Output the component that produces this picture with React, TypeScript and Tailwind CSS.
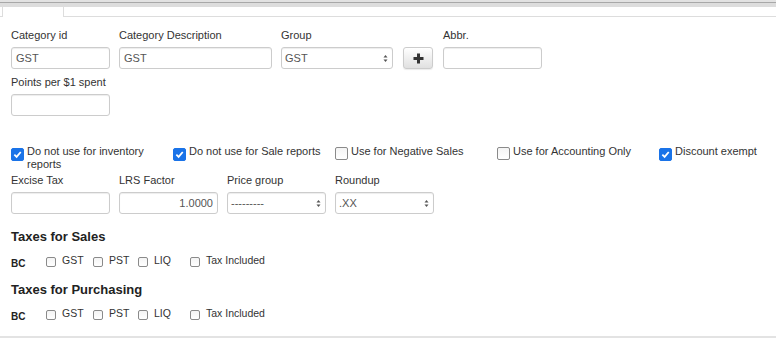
import React from 'react';

const Box = ({ checked = false, size = 13 }: { checked?: boolean; size?: number }) => (
  <span
    className={
      size === 13
        ? `inline-flex shrink-0 w-[13px] h-[13px] items-center justify-center rounded-[2px] border ${
            checked ? 'bg-[#1a73e8] border-[#1a73e8]' : 'bg-gradient-to-b from-[#f4f4f4] to-white border-[#8a8a8a]'
          }`
        : 'inline-flex shrink-0 w-[10px] h-[10px] rounded-[2px] border border-[#8a8a8a] bg-gradient-to-b from-[#f4f4f4] to-white'
    }
  >
    {checked && (
      <svg width="9" height="9" viewBox="0 0 10 10">
        <path d="M1.5 5.2 L4 7.6 L8.6 2.2" fill="none" stroke="white" strokeWidth="2" />
      </svg>
    )}
  </span>
);

const Arrows = () => (
  <svg width="5" height="9" viewBox="0 0 5 9" className="shrink-0">
    <path d="M0.5 3.5 L2.5 1 L4.5 3.5 Z" fill="#555" />
    <path d="M0.5 5.5 L2.5 8 L4.5 5.5 Z" fill="#555" />
  </svg>
);

const inputCls =
  'h-[22px] border border-[#ccc] rounded-[3px] bg-white shadow-[inset_0_1px_1px_rgba(0,0,0,0.075)] text-[11px] text-[#555] flex items-center';

const Field = ({ label, w, value = '', right = false }: { label?: string; w: string; value?: string; right?: boolean }) => (
  <div className={`flex flex-col shrink-0 ${w}`}>
    {label && <div className="leading-[15px] mb-[4px]">{label}</div>}
    <div className={`${inputCls} ${right ? 'justify-end pr-[4px]' : 'pl-[4px]'}`}>{value}</div>
  </div>
);

const Select = ({ label, w, value }: { label: string; w: string; value: string }) => (
  <div className={`flex flex-col shrink-0 ${w}`}>
    <div className="leading-[15px] mb-[4px]">{label}</div>
    <div className={`${inputCls} pl-[3px] pr-[4px] justify-between`}>
      <span>{value}</span>
      <Arrows />
    </div>
  </div>
);

const Check = ({ label, checked }: { label: string; checked?: boolean }) => (
  <div className="w-[162px] shrink-0 flex items-start gap-[3px]">
    <div className="mt-[2px]">
      <Box checked={checked} />
    </div>
    <span className="leading-[13px]">{label}</span>
  </div>
);

const TaxRow = () => (
  <div className="flex items-start h-[14px] text-[10.5px]">
    <span className="w-[35px] pt-[5px] text-[10px] leading-[12px] font-bold text-[#222]">BC</span>
    {[
      ['GST', 'w-[47px]'],
      ['PST', 'w-[45px]'],
      ['LIQ', 'w-[52px]'],
      ['Tax Included', ''],
    ].map(([t, w]) => (
      <div key={t} className={`flex items-start gap-[6px] ${w}`}>
        <div className="mt-[3px]">
          <Box size={10} />
        </div>
        <span className="leading-[12px] mt-[1px]">{t}</span>
      </div>
    ))}
  </div>
);

export default function App() {
  return (
    <div className="w-[776px] h-[338px] bg-white flex flex-col overflow-hidden font-['Liberation_Sans',Arial,sans-serif] text-[11px] text-[#333]">
      {/* top chrome */}
      <div className="h-[2px] bg-[#e2e2e2]" />
      <div className="h-[1px] bg-[#a8a8a8]" />
      <div className="h-[4px] bg-[#dddddd]" />
      {/* tabs */}
      <div className="flex h-[10px]">
        <div className="w-[2px] border-b border-[#ddd]" />
        <div className="w-[62px] border-x border-[#ddd]" />
        <div className="flex-1 border-b border-[#ddd]" />
      </div>

      <div className="flex-1 px-[11px] pt-[11px]">
        <div className="flex items-end">
          <Field label="Category id" w="w-[99px]" value="GST" />
          <div className="w-[9px]" />
          <Field label="Category Description" w="w-[153px]" value="GST" />
          <div className="w-[9px]" />
          <Select label="Group" w="w-[112px]" value="GST" />
          <div className="w-[10px]" />
          <button className="w-[30px] h-[22px] rounded-[3px] border border-[#ccc] bg-gradient-to-b from-white to-[#e0e0e0] shadow-[0_1px_1px_rgba(0,0,0,0.08)] flex items-center justify-center">
            <svg width="11" height="11" viewBox="0 0 11 11">
              <path d="M5.5 0.5 V10.5 M0.5 5.5 H10.5" stroke="#333" strokeWidth="3" />
            </svg>
          </button>
          <div className="w-[10px]" />
          <Field label="Abbr." w="w-[99px]" />
        </div>

        <div className="mt-[6px]">
          <Field label="Points per $1 spent" w="w-[99px]" />
        </div>

        <div className="flex mt-[29px]">
          <Check label="Do not use for inventory reports" checked />
          <Check label="Do not use for Sale reports" checked />
          <Check label="Use for Negative Sales" />
          <Check label="Use for Accounting Only" />
          <Check label="Discount exempt" checked />
        </div>

        <div className="flex gap-[9px] mt-[2px]">
          <Field label="Excise Tax" w="w-[99px]" />
          <Field label="LRS Factor" w="w-[99px]" value="1.0000" right />
          <Select label="Price group" w="w-[99px]" value="---------" />
          <Select label="Roundup" w="w-[99px]" value=".XX" />
        </div>

        <div className="mt-[14px] text-[13px] leading-[18px] font-bold text-[#222]">Taxes for Sales</div>
        <div className="mt-[7px]">
          <TaxRow />
        </div>
        <div className="mt-[14px] text-[13px] leading-[18px] font-bold text-[#222]">Taxes for Purchasing</div>
        <div className="mt-[7px]">
          <TaxRow />
        </div>
      </div>
      <div className="h-[2px] bg-[#e3e3e3]" />
    </div>
  );
}
